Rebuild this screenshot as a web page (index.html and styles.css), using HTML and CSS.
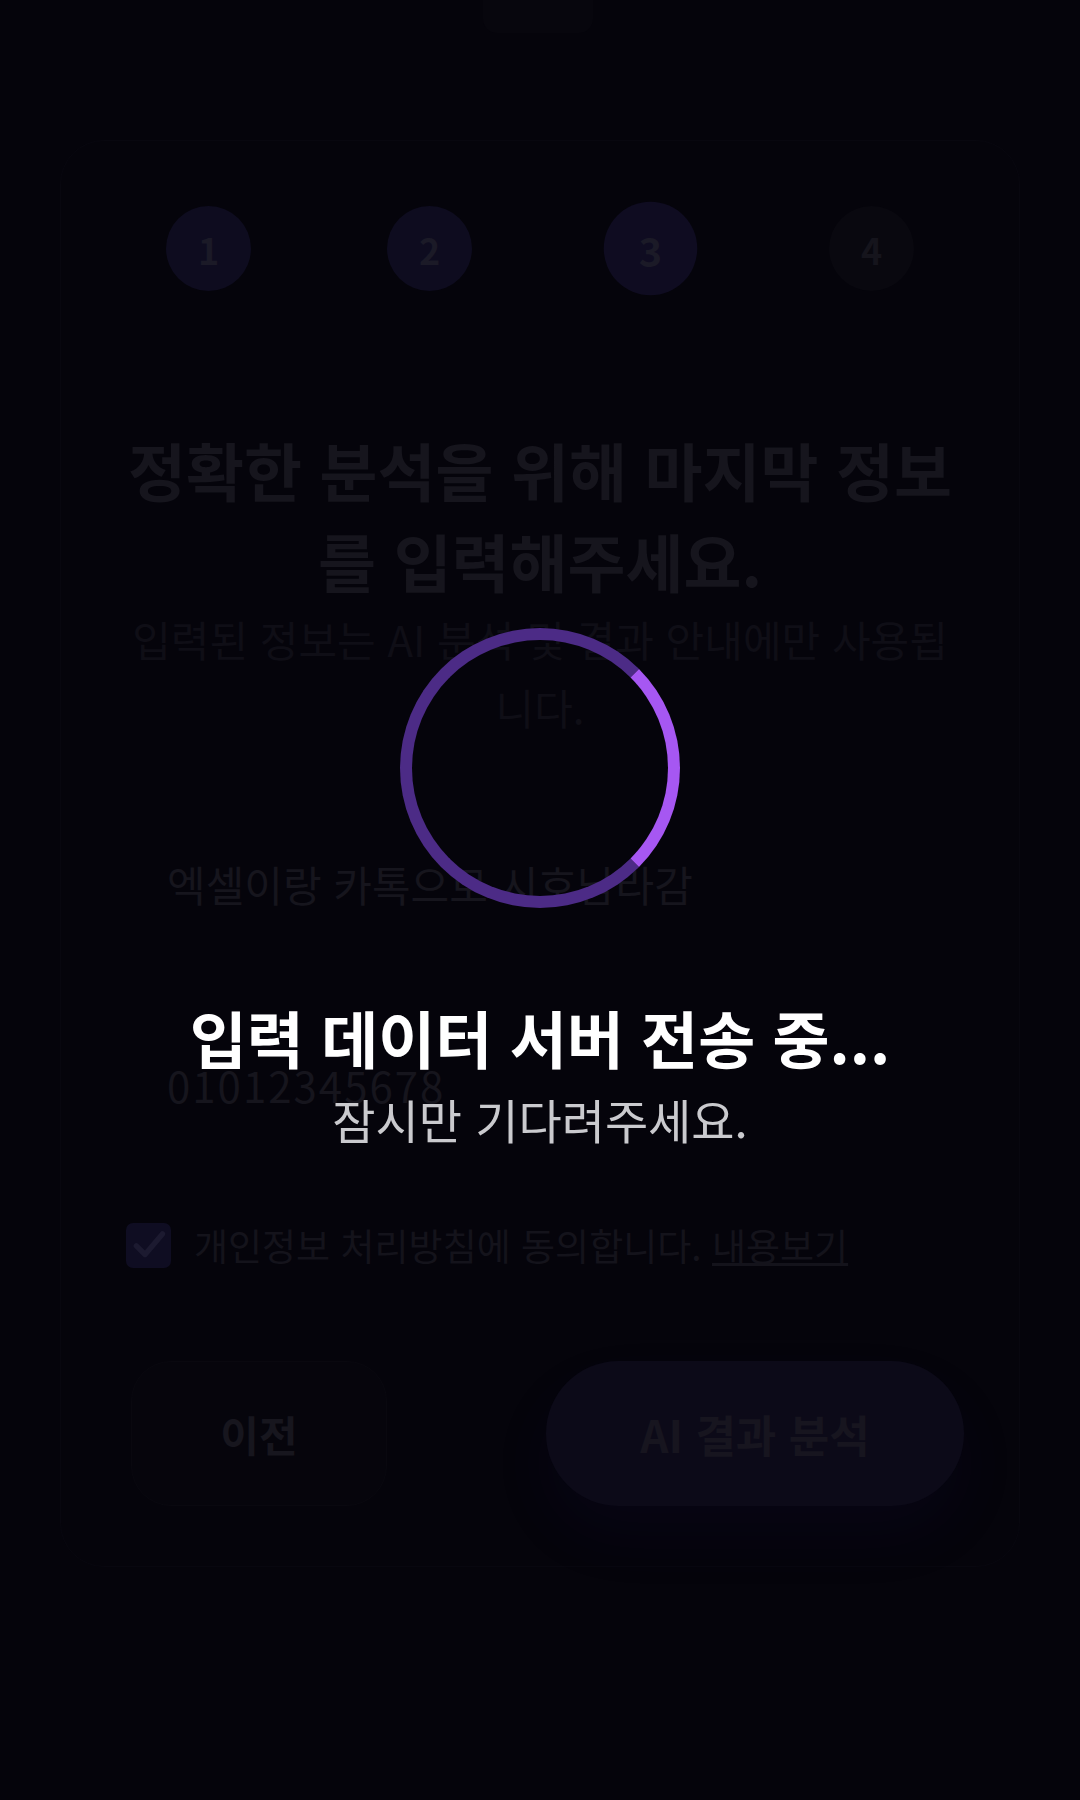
FILE: index.html
```html
<!DOCTYPE html>
<html lang="ko">
<head>
<meta charset="utf-8">
<title>AI 분석 - 정보 입력</title>
<link rel="stylesheet" href="styles.css">
</head>
<body>
<div class="notch"></div>
<main class="card">
  <ol class="steps">
    <li class="step done">1</li>
    <li class="step done">2</li>
    <li class="step active">3</li>
    <li class="step todo">4</li>
  </ol>
  <h1 class="title">정확한 분석을 위해 마지막 정보를 입력해주세요.</h1>
  <p class="desc">입력된 정보는 AI 분석 및 결과 안내에만 사용됩니다.</p>
  <div class="field"><span class="value">엑셀이랑 카톡으로 시호남라감</span></div>
  <div class="field"><span class="value phone">01012345678</span></div>
  <div class="agree">
    <span class="check"><svg viewBox="0 0 24 24" width="38" height="38"><path d="M4 12.5l5.5 5.5L20.5 5" fill="none" stroke="#1c1a30" stroke-width="3.4" stroke-linecap="round" stroke-linejoin="round"/></svg></span>
    <span class="agree-text">개인정보 처리방침에 동의합니다. <span class="link">내용보기</span></span>
  </div>
  <div class="actions">
    <button class="btn prev">이전</button>
    <button class="btn next">AI 결과 분석</button>
  </div>
</main>
<div class="overlay">
  <div class="spinner"></div>
  <p class="ov-title">입력 데이터 서버 전송 중...</p>
  <p class="ov-sub">잠시만 기다려주세요.</p>
</div>
</body>
</html>
```
FILE: styles.css
```css
* { box-sizing: border-box; }
html, body {
  margin: 0;
  padding: 0;
  background: #05040b;
  font-family: "Noto Sans CJK KR", "Noto Sans", sans-serif;
}
body {
  width: 1080px;
  height: 1800px;
  overflow: hidden;
  position: relative;
}
.notch {
  position: absolute;
  top: 0;
  left: 483px;
  width: 110px;
  height: 33px;
  border-radius: 0 0 14px 14px;
  background: #07060d;
}
.card {
  margin: 140px 60px 0;
  height: 1427px;
  padding: 65px 60px 60px;
  border: 1px solid #08070f;
  border-radius: 44px;
  background: #05040b;
}
.steps {
  list-style: none;
  margin: 0;
  padding: 0;
  display: flex;
  justify-content: center;
  gap: 136px;
}
.step {
  width: 85px;
  height: 85px;
  border-radius: 50%;
  display: flex;
  align-items: center;
  justify-content: center;
  font-size: 36px;
  font-weight: 700;
  color: #1b1a27;
  background: #0e0c1f;
}
.step.active { transform: scale(1.1); background: #0f0c21; }
.step.todo { background: #09080f; color: #15141c; }
.title {
  margin: 132px 0 0;
  font-size: 63px;
  line-height: 91px;
  font-weight: 700;
  text-align: center;
  color: #16151d;
}
.desc {
  margin: 0;
  font-size: 42px;
  line-height: 68px;
  text-align: center;
  color: #0f0e16;
}
.field {
  height: 120px;
  display: flex;
  align-items: center;
  padding-left: 46px;
  margin-top: 82px;
}
.field + .field { margin-top: 81px; }
.value {
  font-size: 42px;
  color: #16151d;
}
.value.phone { letter-spacing: 2px; }
.agree {
  margin-top: 76px;
  display: flex;
  align-items: center;
  gap: 23px;
  padding-left: 5px;
  height: 50px;
}
.check {
  width: 45px;
  height: 45px;
  border-radius: 7px;
  background: #0f0d22;
  display: flex;
  align-items: center;
  justify-content: center;
}
.agree-text {
  font-size: 37px;
  line-height: 50px;
  color: #14131b;
}
.link { text-decoration: underline; }
.actions {
  margin-top: 91px;
  display: flex;
  justify-content: space-between;
  padding-left: 10px;
}
.btn {
  height: 145px;
  border: 0;
  font-family: inherit;
  font-weight: 700;
}
.prev {
  width: 256px;
  border-radius: 40px;
  background: #06050c;
  border: 1px solid #09080f;
  color: #17161e;
  font-size: 42px;
}
.next {
  width: 418px;
  margin-right: -5px;
  border-radius: 73px;
  background: #0c0a18;
  color: #17151f;
  font-size: 44px;
  box-shadow: 0 30px 60px rgba(40, 30, 110, 0.08);
}
.overlay {
  position: fixed;
  inset: 0;
  display: flex;
  flex-direction: column;
  align-items: center;
  justify-content: center;
  padding-bottom: 22px;
}
.spinner {
  width: 280px;
  height: 280px;
  border-radius: 50%;
  border: 12px solid #4c2b86;
  border-right-color: #a657f2;
}
.ov-title {
  margin: 91px 0 0;
  font-size: 62px;
  line-height: 77px;
  font-weight: 700;
  color: #ffffff;
}
.ov-sub {
  margin: 12px 0 0;
  font-size: 47px;
  line-height: 62px;
  color: #cacace;
}
```
